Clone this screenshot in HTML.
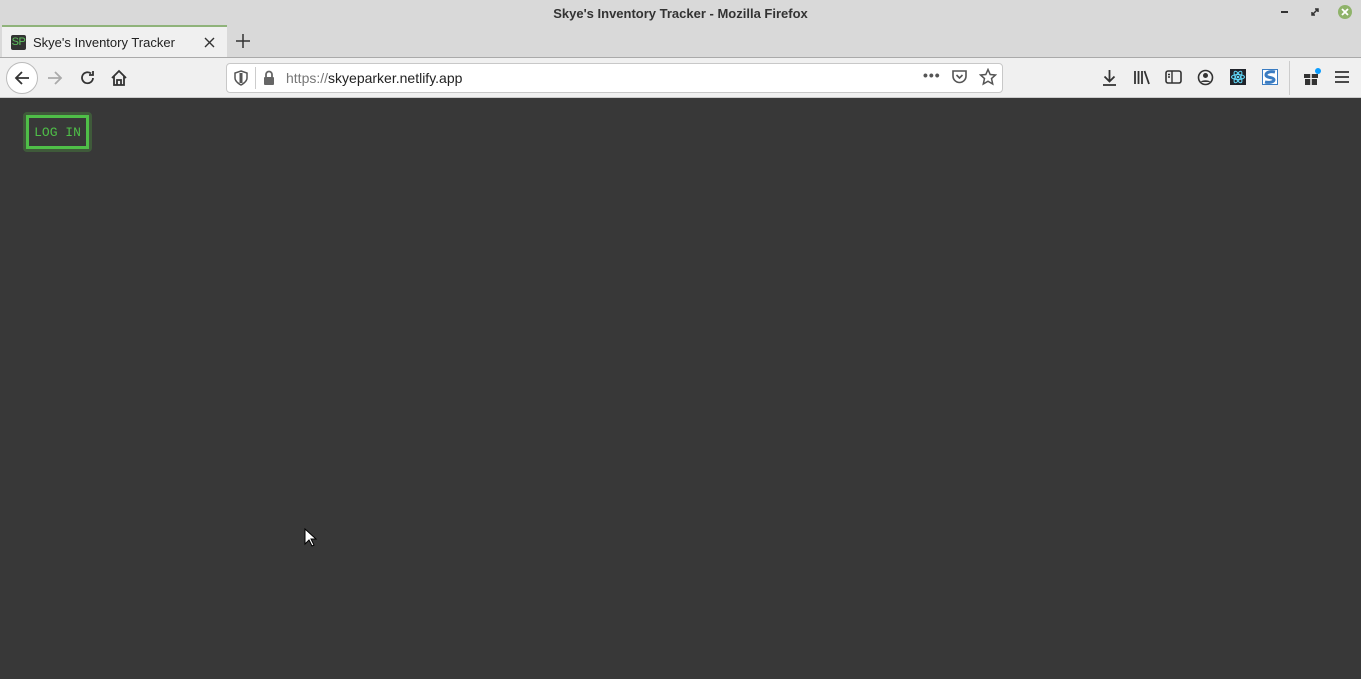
<!DOCTYPE html>
<html><head><style>
*{margin:0;padding:0;box-sizing:border-box}
body{width:1361px;height:679px;overflow:hidden;background:#383838;font-family:"Liberation Sans",sans-serif;position:relative}
.abs{position:absolute}
#title{left:0;top:0;width:1361px;height:57px;background:#d9d9d9}
#title .t{left:0;width:1361px;top:6px;text-align:center;font-size:13px;color:#333;font-weight:bold}
#tab{left:2px;top:25px;width:225px;height:33px;background:#f0f0f0;border-top:2px solid #8fb37a}
#tbar{left:0;top:57px;width:1361px;height:41px;background:#f0f0f0;border-top:1px solid #aaa;border-bottom:1px solid #ccc}
#url{left:226px;top:63px;width:777px;height:30px;background:#fff;border:1px solid #c8c8c8;border-radius:4px}
svg{position:absolute}
</style></head><body>
<div id="title" class="abs"><div class="t abs">Skye's Inventory Tracker - Mozilla Firefox</div>
<div class="abs" style="left:1281px;top:11px;width:7px;height:2px;background:#333"></div>
<svg style="left:1311px;top:8px" width="8" height="8"><path d="M1 7L7 1M4 1H7V4M1 4V7H4" stroke="#333" stroke-width="1.5" fill="none"/></svg>
<div class="abs" style="left:1338px;top:5px;width:14px;height:14px;border-radius:50%;background:#8fb36a"></div>
<svg style="left:1341px;top:8px" width="8" height="8"><path d="M1 1L7 7M7 1L1 7" stroke="#fff" stroke-width="1.8"/></svg>
</div>
<div id="tab" class="abs">
<div class="abs" style="left:9px;top:8px;width:15px;height:15px;background:#333;border-radius:2px;color:#5fc35f;font-size:11px;line-height:15px;text-align:center;letter-spacing:-0.5px">SP</div>
<div class="abs" style="left:31px;top:8px;font-size:13px;color:#222">Skye's Inventory Tracker</div>
<svg style="left:202px;top:10px" width="11" height="11"><path d="M1 1L10 10M10 1L1 10" stroke="#333" stroke-width="1.4"/></svg>
</div>
<svg style="left:236px;top:34px" width="14" height="14"><path d="M7 0V14M0 7H14" stroke="#333" stroke-width="1.5"/></svg>
<div id="tbar" class="abs"></div>
<div class="abs" style="left:6px;top:62px;width:32px;height:32px;border-radius:50%;background:#fff;border:1px solid #bbb"></div>
<svg style="left:13px;top:69px" width="18" height="18"><path d="M16 9H3M9 3L3 9L9 15" stroke="#333" stroke-width="1.8" fill="none"/></svg>
<svg style="left:46px;top:69px" width="18" height="18"><path d="M2 9H15M9 3L15 9L9 15" stroke="#aaa" stroke-width="1.8" fill="none"/></svg>
<svg style="left:79px;top:69px" width="18" height="18"><path d="M14 9A5.5 5.5 0 1 1 12 4.5M14 2V6H10" stroke="#333" stroke-width="1.8" fill="none"/></svg>
<svg style="left:110px;top:69px" width="18" height="18"><path d="M2 9L9 2L16 9M4 7V16H14V7M7 16V11H11V16" stroke="#333" stroke-width="1.8" fill="none"/></svg>
<div id="url" class="abs"></div>
<svg style="left:234px;top:70px" width="14" height="16"><path d="M7 1L13 3V8C13 12 7 15 7 15C7 15 1 12 1 8V3Z" stroke="#555" stroke-width="1.5" fill="none"/><path d="M7 3V13" stroke="#555" stroke-width="3"/></svg>
<div class="abs" style="left:255px;top:67px;width:1px;height:22px;background:#ccc"></div>
<svg style="left:263px;top:70px" width="12" height="15"><path d="M3 7V4.5A3 3 0 0 1 9 4.5V7" stroke="#666" stroke-width="1.8" fill="none"/><rect x="1" y="7" width="10" height="8" rx="1" fill="#666"/></svg>
<div class="abs" style="left:286px;top:70px;font-size:14px;color:#222"><span style="color:#777">https://</span>skyeparker.netlify.app</div>
<div class="abs" style="left:923px;top:67px;font-size:14px;color:#555;letter-spacing:1px;font-weight:bold">•••</div>
<svg style="left:951px;top:69px" width="17" height="16"><path d="M2 2H15V7A6.5 6.5 0 0 1 2 7Z" stroke="#555" stroke-width="1.6" fill="none"/><path d="M5.5 6L8.5 9L11.5 6" stroke="#555" stroke-width="1.6" fill="none"/></svg>
<svg style="left:979px;top:68px" width="18" height="18"><path d="M9 1.5L11.2 6.5L16.5 7L12.5 10.5L13.7 16L9 13.2L4.3 16L5.5 10.5L1.5 7L6.8 6.5Z" stroke="#555" stroke-width="1.5" fill="none"/></svg>
<svg style="left:1101px;top:69px" width="17" height="18"><path d="M8.5 1V12M3.5 7.5L8.5 12.5L13.5 7.5M2 16H15" stroke="#333" stroke-width="1.8" fill="none"/></svg>
<svg style="left:1133px;top:69px" width="18" height="17"><path d="M2 2V15M5.5 2V15M9 2V15M11.5 2L16 15" stroke="#333" stroke-width="1.8" fill="none"/></svg>
<svg style="left:1165px;top:69px" width="17" height="17"><rect x="1" y="2" width="15" height="12" rx="2" stroke="#333" stroke-width="1.6" fill="none"/><path d="M7 2V14M3 5.5H5M3 8H5" stroke="#333" stroke-width="1.4"/></svg>
<svg style="left:1197px;top:69px" width="17" height="17"><circle cx="8.5" cy="8.5" r="7" stroke="#333" stroke-width="1.6" fill="none"/><circle cx="8.5" cy="6.5" r="2.5" fill="#333"/><path d="M3.5 13A6 4 0 0 1 13.5 13" fill="#333"/></svg>
<div class="abs" style="left:1230px;top:69px;width:16px;height:16px;background:#20232a"></div>
<svg style="left:1230px;top:69px" width="16" height="16"><g stroke="#61dafb" stroke-width="1" fill="none"><ellipse cx="8" cy="8" rx="6.5" ry="2.5"/><ellipse cx="8" cy="8" rx="6.5" ry="2.5" transform="rotate(60 8 8)"/><ellipse cx="8" cy="8" rx="6.5" ry="2.5" transform="rotate(-60 8 8)"/></g><circle cx="8" cy="8" r="1.3" fill="#61dafb"/></svg>
<div class="abs" style="left:1262px;top:69px;width:16px;height:16px;background:#fff;border:1px solid #3a7cc2"></div>
<svg style="left:1262px;top:69px" width="16" height="16"><path d="M13 3C9 2 4 3 4 6C4 9 12 8 12 11C12 13 7 14 3 13" stroke="#3a7cc2" stroke-width="3" fill="none"/></svg>
<div class="abs" style="left:1289px;top:61px;width:1px;height:34px;background:#ccc"></div>
<svg style="left:1302px;top:68px" width="20" height="18"><rect x="2" y="6" width="14" height="4" fill="#333"/><rect x="3" y="11" width="12" height="6" fill="#333"/><path d="M9 6V17" stroke="#f0f0f0" stroke-width="1.5"/><circle cx="16" cy="3" r="3" fill="#0a9dff"/></svg>
<svg style="left:1335px;top:70px" width="14" height="14"><path d="M0 2H14M0 7H14M0 12H14" stroke="#333" stroke-width="1.8"/></svg>
<div class="abs" style="left:23px;top:112px;width:69px;height:40px;border:3px solid #3f5a3a;border-radius:4px"></div>
<div class="abs" style="left:26px;top:115px;width:63px;height:34px;border:3px solid #4fbf48;color:#4fbf48;font-family:'Liberation Mono',monospace;font-size:13px;line-height:29px;text-align:center">LOG IN</div>
<svg style="left:304px;top:528px" width="14" height="20"><path d="M1 1V16L5 12L8 18L10 17L7 11H12Z" fill="#fff" stroke="#000" stroke-width="1"/></svg>
</body></html>
